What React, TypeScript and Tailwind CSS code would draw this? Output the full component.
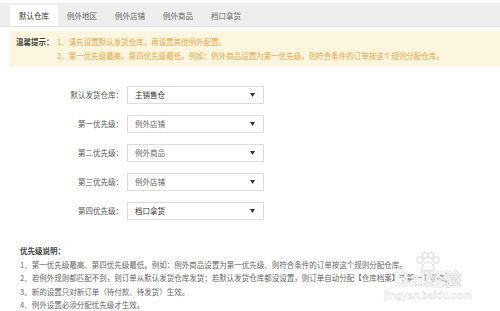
import React from "react";

const tabs = ["默认仓库", "例外地区", "例外店铺", "例外商品", "档口拿货"];

const rows = [
  { label: "默认发货仓库：", value: "主销售仓", strong: true },
  { label: "第一优先级：", value: "例外店铺" },
  { label: "第二优先级：", value: "例外商品" },
  { label: "第三优先级：", value: "例外店铺" },
  { label: "第四优先级：", value: "档口拿货", strong: true },
];

const notes = [
  "1、第一优先级最高、第四优先级最低。例如：例外商品设置为第一优先级、则符合条件的订单按这个规则分配仓库。",
  "2、若例外规则都匹配不到，则订单从默认发货仓库发货；若默认发货仓库都没设置，则订单自动分配【仓库档案】中第一个仓库。",
  "3、新的设置只对新订单（待付款、待发货）生效。",
  "4、例外设置必须分配优先级才生效。",
];

function Select({ value, strong }: { value: string; strong?: boolean }) {
  return (
    <div className="flex h-[18px] w-[137px] items-center justify-between border border-[#dcdcdc] bg-white pl-[7px] pr-[8px]">
      <span className={strong ? "text-[#333]" : "text-[#666]"}>{value}</span>
      <svg width="5" height="4" viewBox="0 0 5 4" aria-hidden>
        <path d="M0 0h5L2.5 4z" fill="#333" />
      </svg>
    </div>
  );
}

export default function App() {
  return (
    <div
      className="relative h-[311px] w-[500px] overflow-hidden bg-white text-[7.5px] leading-none"
      style={{ fontFamily: '"Noto Sans CJK SC", "Noto Sans", sans-serif' }}
    >
      {/* tabs */}
      <div className="mt-[3px] flex h-[24px] items-end border-b border-[#e2e2e2] bg-[#eeeeee] pl-[10px]">
        {tabs.map((t, i) => (
          <div
            key={t}
            className={
              "flex h-[21px] w-[48px] items-center justify-center " +
              (i === 0 ? "bg-white text-[#333]" : "text-[#666]")
            }
          >
            {t}
          </div>
        ))}
      </div>

      {/* notice */}
      <div className="ml-[10px] mt-[4px] flex h-[36px] bg-[#fdf6df] pl-[6px] pt-[4px]">
        <div className="w-[41px] font-bold leading-[14px] text-[#444]">温馨提示：</div>
        <div className="leading-[14px] text-[#eaa748]">
          <div>1、请先设置默认发货仓库，再设置其他例外配置。</div>
          <div>2、第一优先级最高，第四优先级最低。例如：例外商品设置为第一优先级，则符合条件的订单按这个规则分配仓库。</div>
        </div>
      </div>

      {/* form */}
      <div className="mt-[19px] flex flex-col gap-[11px]">
        {rows.map((r) => (
          <div key={r.label} className="flex items-center gap-[4px]">
            <div className="w-[123px] text-right text-[#555]">{r.label}</div>
            <Select value={r.value} strong={r.strong} />
          </div>
        ))}
      </div>

      {/* explanation */}
      <div className="mt-[24px] pl-[20px] leading-[13.5px]">
        <div className="font-bold text-[#444]">优先级说明：</div>
        {notes.map((n) => (
          <div key={n} className="whitespace-nowrap text-[#666]">
            {n}
          </div>
        ))}
      </div>

      {/* watermark */}
      <div className="pointer-events-none absolute left-[383px] top-[252px] flex w-[90px] flex-col items-center text-white opacity-90">
        <svg width="28" height="20" viewBox="0 0 28 20" aria-hidden>
          <g fill="rgba(255,255,255,0.7)" stroke="#d4d4d4" strokeWidth="1">
            <ellipse cx="6" cy="8" rx="3" ry="3.5" />
            <ellipse cx="11" cy="3.5" rx="3" ry="3" />
            <ellipse cx="17" cy="3.5" rx="3" ry="3" />
            <ellipse cx="22" cy="8" rx="3" ry="3.5" />
            <path d="M8 17c0-4 3-7 6-7s6 3 6 7c0 2-3 2-6 2s-6 0-6-2z" />
          </g>
        </svg>
        <div
          className="-mt-[3px] text-[20px] font-bold leading-none"
          style={{ fontFamily: '"Liberation Sans", "Noto Sans CJK SC", sans-serif', WebkitTextStroke: "0.6px #cfcfcf" }}
        >
          Bai<span className="text-[18px]">经验</span>
        </div>
        <div
          className="mt-[2px] text-[10px] font-bold leading-none"
          style={{ fontFamily: '"Liberation Sans", sans-serif', WebkitTextStroke: "0.4px #d6d6d6" }}
        >
          jingyan.baidu.com
        </div>
      </div>
    </div>
  );
}
